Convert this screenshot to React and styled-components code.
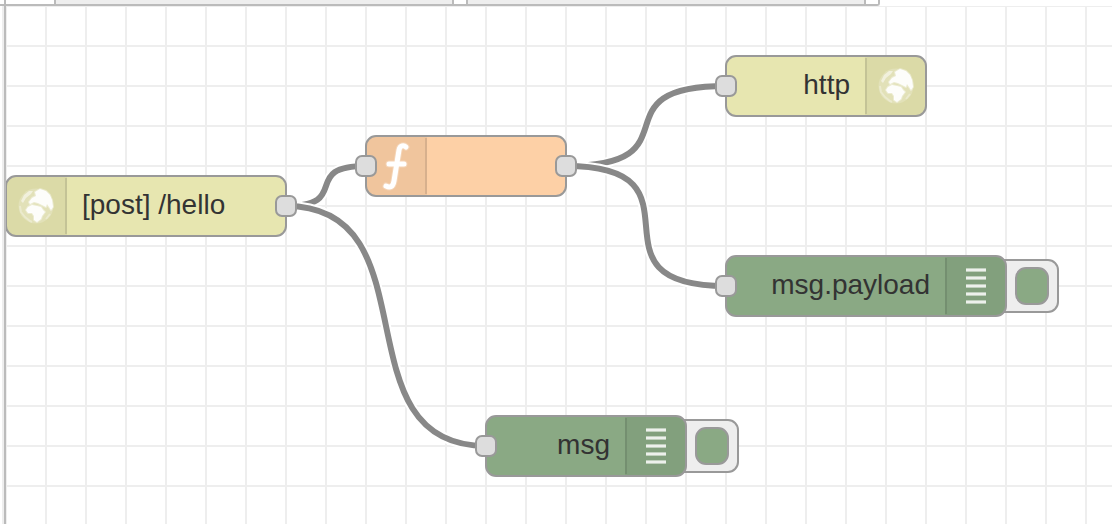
import React from "react";
import styled, { createGlobalStyle } from "styled-components";

const GlobalStyle = createGlobalStyle`
  * { box-sizing: border-box; }
  body {
    margin: 0;
    background: #fff;
    font-family: "Helvetica Neue", Helvetica, Arial, "Liberation Sans", sans-serif;
  }
`;

const Workspace = styled.main`
  display: flex;
  flex-direction: column;
  height: 100vh;
  overflow: hidden;
`;

const TabBar = styled.div`
  display: flex;
  flex: none;
  height: 6px;
`;

const TabStrip = styled.div`
  display: flex;
  gap: 12px;
  padding: 0 12px 0 48px;
  margin-left: 4px;
  border: 2px solid #bbb;
  border-top: 0;
  border-bottom-right-radius: 3px;
  position: relative;

  &::before {
    content: "";
    position: absolute;
    left: -6px;
    bottom: -2px;
    width: 6px;
    height: 2px;
    background: #bbb;
  }
`;

const Tab = styled.div`
  width: 400px;
  background: #eee;
  border: solid #bbb;
  border-width: 0 2px;
`;

const Body = styled.div`
  display: flex;
  flex: 1;
  min-height: 0;
  padding-left: 2px;
`;

const Gutter = styled.div`
  width: 4px;
  background: #eee;
  border-right: 2px solid #bbb;
`;

const Canvas = styled.section`
  position: relative;
  flex: 1;
  overflow: hidden;
  background-image: linear-gradient(#eee 2px, transparent 2px),
    linear-gradient(90deg, #eee 2px, transparent 2px);
  background-size: 40px 40px;
  background-position: -1px -1px;
`;

const Wires = styled.svg`
  position: absolute;
  inset: 0;
  width: 100%;
  height: 100%;
  fill: none;
`;

const NodeFrame = styled.div`
  position: absolute;
  left: ${(p) => p.$x - 1}px;
  top: ${(p) => p.$y - 1}px;
  width: ${(p) => p.$w + 2}px;
  height: 62px;
`;

const NodeBox = styled.div`
  position: relative;
  display: flex;
  flex-direction: ${(p) => (p.$iconRight ? "row-reverse" : "row")};
  height: 100%;
  border: 2px solid #999;
  border-radius: 11px;
  background: ${(p) => p.$color};
  overflow: hidden;
`;

const IconCell = styled.div`
  display: flex;
  flex: none;
  align-items: center;
  justify-content: center;
  position: relative;
  width: 60px;
  padding: ${(p) => (p.$iconRight ? "0 0 0 2px" : "0 2px 0 0")};
  background: rgba(0, 0, 0, 0.05);

  &::after {
    content: "";
    position: absolute;
    top: 1px;
    bottom: 1px;
    ${(p) => (p.$iconRight ? "left" : "right")}: 0;
    width: 2px;
    background: rgba(0, 0, 0, 0.1);
  }

  svg { display: block; flex: none; }
`;

const Label = styled.span`
  flex: 1;
  padding: 0 15px;
  font-size: 28px;
  line-height: 56px;
  color: #333;
  white-space: nowrap;
  text-align: ${(p) => (p.$iconRight ? "right" : "left")};
`;

const Port = styled.span`
  position: absolute;
  top: 20px;
  ${(p) => p.$side}: -10px;
  width: 22px;
  height: 22px;
  border: 2px solid #999;
  border-radius: 7px;
  background: #ddd;
`;

const ToggleButton = styled.button`
  position: absolute;
  top: 4px;
  right: -52px;
  display: flex;
  justify-content: flex-end;
  align-items: center;
  width: 66px;
  height: 54px;
  padding: 0 8px;
  border: 2px solid #999;
  border-radius: 11px;
  background: #eee;
`;

const ToggleFace = styled.span`
  width: 34px;
  height: 38px;
  border: 2px solid #999;
  border-radius: 11px;
  background: ${(p) => p.$color};
`;

const GlobeIcon = () => (
  <svg width="40" height="40" viewBox="0 0 40 40" fill="#fff" stroke="#fff" strokeLinejoin="round" aria-hidden="true">
    <circle cx="20" cy="20" r="17.5" stroke="none" opacity="0.2" />
    <path d="M5 15 L8 9 L13 5 L17 5 L15 8 L10 12 L7 17Z" stroke="none" opacity="0.5" />
    <path d="M4 20 L5 26 L9 31 L14 35 L16 36 M30 33 L34 28" fill="none" strokeWidth="2" opacity="0.3" />
    <g strokeWidth="2" strokeOpacity="0.35" fillOpacity="0.92">
      <path d="M19 6 L24 3 L30 5 L34 9 L36 14 L37 21 L35 24 L33 21 L31 18 L30 21 L26 19 L22 17 L18 16 L14 18 L13 16 L16 12 L20 10Z" />
      <path d="M12 21 L16 19 L21 20 L25 21 L27 24 L29 26 L26 30 L25 33 L21 36 L18 34 L18 30 L16 27 L12 27 L10 24Z" />
    </g>
  </svg>
);

const FUNCTION_STROKES = "M30 9 C28 7 24 7 23 12 L18 43 C17 49 14 50 10 48 M13 26 H28";

const FunctionIcon = () => (
  <svg width="40" height="56" viewBox="0 0 40 56" fill="none" stroke="#fff" strokeLinecap="round" aria-hidden="true">
    <path d={FUNCTION_STROKES} strokeWidth="7" opacity="0.25" />
    <path d={FUNCTION_STROKES} strokeWidth="5" />
  </svg>
);

const DebugIcon = () => (
  <svg width="40" height="40" viewBox="0 0 40 40" fill="#fff" aria-hidden="true">
    {[2, 10, 18, 26, 34].map((y) => (
      <g key={y}>
        <rect x="10" y={y} width="20" height="4" opacity="0.5" />
        <rect x="10" y={y + 1} width="20" height="2" opacity="0.7" />
      </g>
    ))}
  </svg>
);

const icons = { globe: GlobeIcon, func: FunctionIcon, debug: DebugIcon };

const nodes = [
  { id: "in", x: 0, y: 170, w: 280, color: "#e7e6b0", icon: "globe", label: "[post] /hello", output: true },
  { id: "fn", x: 360, y: 130, w: 200, color: "#fdd0a6", icon: "func", label: "", input: true, output: true },
  { id: "http", x: 720, y: 50, w: 200, color: "#e7e6b0", icon: "globe", label: "http", iconRight: true, input: true },
  { id: "payload", x: 720, y: 250, w: 280, color: "#8aa984", icon: "debug", label: "msg.payload", iconRight: true, input: true, toggle: true },
  { id: "msg", x: 480, y: 410, w: 200, color: "#8aa984", icon: "debug", label: "msg", iconRight: true, input: true, toggle: true },
];

const links = [
  ["in", "fn"],
  ["in", "msg"],
  ["fn", "http"],
  ["fn", "payload"],
];

function linkPath([from, to]) {
  const a = nodes.find((n) => n.id === from);
  const b = nodes.find((n) => n.id === to);
  const x1 = a.x + a.w;
  const y1 = a.y + 30;
  const x2 = b.x;
  const y2 = b.y + 30;
  const reach = 0.75 * Math.min(200, Math.hypot(x2 - x1, y2 - y1));
  return `M${x1} ${y1} C${x1 + reach} ${y1} ${x2 - reach} ${y2} ${x2} ${y2}`;
}

function FlowNode({ x, y, w, color, icon, label, iconRight, input, output, toggle }) {
  const Icon = icons[icon];
  return (
    <NodeFrame $x={x} $y={y} $w={w}>
      {toggle && (
        <ToggleButton type="button" aria-label={`Toggle ${label}`}>
          <ToggleFace $color={color} />
        </ToggleButton>
      )}
      <NodeBox $color={color} $iconRight={iconRight}>
        <IconCell $iconRight={iconRight}>
          <Icon />
        </IconCell>
        <Label $iconRight={iconRight}>{label}</Label>
      </NodeBox>
      {input && <Port $side="left" />}
      {output && <Port $side="right" />}
    </NodeFrame>
  );
}

export default function App() {
  return (
    <Workspace>
      <GlobalStyle />
      <TabBar>
        <TabStrip>
          <Tab />
          <Tab />
        </TabStrip>
      </TabBar>
      <Body>
        <Gutter />
        <Canvas>
          <Wires aria-hidden="true">
            {links.map((link) => (
              <g key={link.join("-")}>
                <path d={linkPath(link)} stroke="#fff" strokeWidth="10" />
                <path d={linkPath(link)} stroke="#888" strokeWidth="6" />
              </g>
            ))}
          </Wires>
          {nodes.map((node) => (
            <FlowNode key={node.id} {...node} />
          ))}
        </Canvas>
      </Body>
    </Workspace>
  );
}
